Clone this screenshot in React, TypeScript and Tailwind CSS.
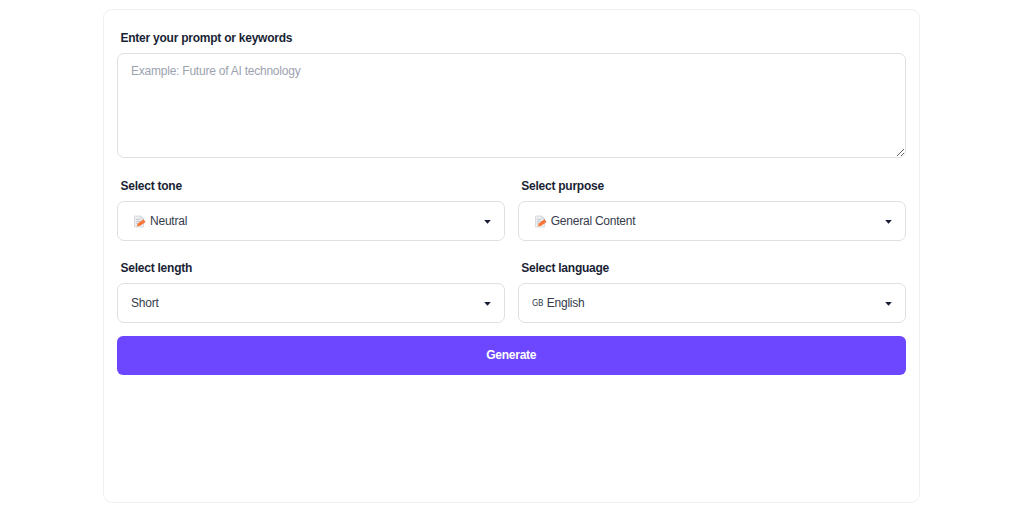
import React, { useState } from 'react';

interface SelectFieldProps {
  label: string;
  value: string;
  icon?: React.ReactNode;
}

function MemoIcon() {
  return (
    <svg width="13" height="13" viewBox="0 0 13 13" className="ml-[2px] mr-[4px] mt-px shrink-0">
      <path d="M1.5 1h6.3l2.7 2.6V12h-9z" fill="#eceef0" stroke="#d3d6da" strokeWidth="0.8" />
      <path d="M7.8 1v2.7h2.7" fill="#dfe2e6" stroke="#cfd3d8" strokeWidth="0.6" />
      <path d="M3 4.4h4M3 6.3h5M3 8.2h3" stroke="#bfc3c9" strokeWidth="0.8" />
      <path d="M3.6 11.6l.8-2.7 2 2.2z" fill="#f08a58" />
      <path d="M4.3 9l5-4 2.4 2.7-5.5 3.6z" fill="#fc7434" />
      <path d="M9.3 5l.9-.7 2.3 2.5-.9.9z" fill="#e9683c" />
    </svg>
  );
}

function SelectField({ label, value, icon }: SelectFieldProps) {
  return (
    <div>
      <label className="block pl-[3.5px] text-[12px] leading-[18px] font-bold tracking-[-0.24px] text-[#1a1f36]">
        {label}
      </label>
      <button
        type="button"
        className="mt-[6px] flex h-[39.5px] w-full items-center rounded-[7px] border border-[#dfe0e4] bg-white px-[13px] text-[12px] leading-[18px] tracking-[-0.23px] text-[#363b4c]"
      >
        {icon}
        <span>{value}</span>
        <svg width="7" height="4" viewBox="0 0 7 4" className="ml-auto mt-[2px]">
          <path d="M0.2 0h6.6L3.5 3.7z" fill="#171c35" />
        </svg>
      </button>
    </div>
  );
}

export default function App() {
  const [prompt, setPrompt] = useState('');

  return (
    <div className="h-[517px] bg-white pt-[9px] font-['Liberation_Sans',Arial,sans-serif]">
      <div className="ml-[103px] h-[494px] w-[816.5px] rounded-[9px] border border-[#f0f0f2] px-[13px] pt-[19px]">
        {/* Prompt */}
        <label className="block pl-[3.5px] text-[12px] leading-[18px] font-bold tracking-[-0.24px] text-[#1a1f36]">
          Enter your prompt or keywords
        </label>
        <textarea
          value={prompt}
          onChange={e => setPrompt(e.target.value)}
          placeholder="Example: Future of AI technology"
          className="mt-[6px] block h-[105px] w-full resize rounded-[7px] border border-[#dfe0e4] bg-white px-[13px] py-[8px] text-[12px] leading-[18px] tracking-[-0.23px] text-[#363b4c] outline-none placeholder:text-[#9ca3af]"
        />

        {/* Options */}
        <div className="mt-[19px] grid grid-cols-2 gap-x-[13px] gap-y-[18.5px]">
          <SelectField label="Select tone" value="Neutral" icon={<MemoIcon />} />
          <SelectField label="Select purpose" value="General Content" icon={<MemoIcon />} />
          <SelectField label="Select length" value="Short" />
          <SelectField
            label="Select language"
            value="English"
            icon={
              <span className="mr-[3px] w-[12px] pt-[3px] text-center font-['DejaVu_Sans',sans-serif] text-[8px] leading-[18px] tracking-normal">
                GB
              </span>
            }
          />
        </div>

        <button
          type="button"
          className="mt-[13.5px] h-[39px] w-full rounded-[6px] bg-[#6c47ff] pb-[2px] text-[12px] font-bold tracking-[-0.24px] text-white"
        >
          Generate
        </button>
      </div>
    </div>
  );
}
